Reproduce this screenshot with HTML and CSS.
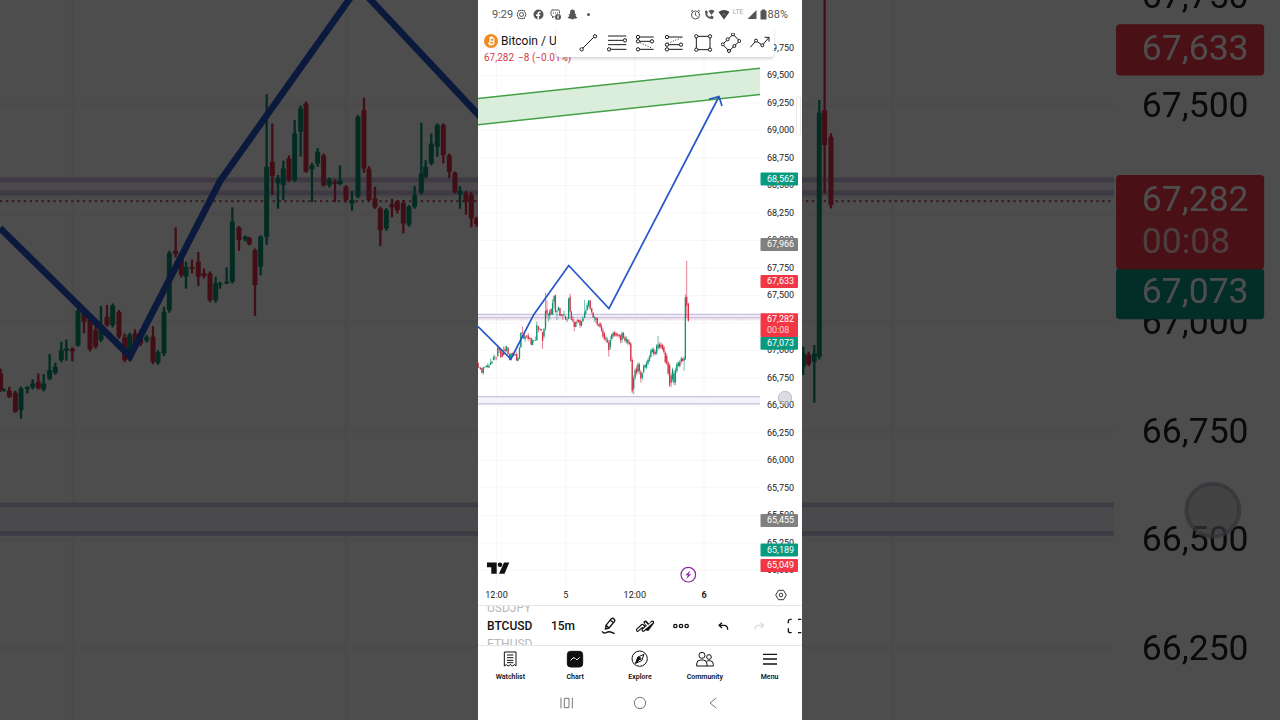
FILE: index.html
```html
<!DOCTYPE html>
<html lang="en">
<head>
  <meta charset="UTF-8">
  <meta name="viewport" content="width=device-width, initial-scale=1.0">
  <title>Bitcoin / U.S. Dollar</title>
  <link rel="stylesheet" href="styles.css">
</head>
<body>
  <svg class="backdrop" viewBox="0 0 324 720" preserveAspectRatio="xMidYMid slice" aria-hidden="true"></svg>

  <main class="phone">
    <div class="status">
      <div class="notices">
        <span class="clock">9:29</span>
        <svg width="11" height="11" viewBox="0 0 22 22" fill="none" stroke="#555" stroke-width="2"><circle cx="11" cy="11" r="8.500"/><circle cx="11" cy="11" r="4"/><path d="M6 4L4 2M16 4l2-2M6 18l-2 2M16 18l2 2" stroke-width="1.500"/></svg>
        <svg width="11" height="11" viewBox="0 0 22 22"><circle cx="11" cy="11" r="10" fill="#555"/><path d="M9 21v-7H6v-3h3V9q0-4 4-4h2v3h-2q-1 0-1 1v2h3l-1 3h-2v7z" fill="#fff"/></svg>
        <svg width="11" height="11" viewBox="0 0 22 22"><path d="M4 2h12q3 0 3 3v4M2 5v6q0 3 3 3v4l4-4M2 5q0-3 3-3" fill="none" stroke="#555" stroke-width="2"/><path d="M6 8h2M10 8h2M14 8h2" stroke="#555" stroke-width="2"/><circle cx="16" cy="16" r="6" fill="#555"/><path d="M16 21v-7q0-2 2-2M14 16h4" fill="none" stroke="#fff" stroke-width="1.500"/></svg>
        <svg width="11" height="11" viewBox="0 0 22 22"><path d="M11 1q5 0 5 6v3l3 0-2 3q1 3 4 4-1 2-4 2-1 1-3 0-1 2-3 2t-3-2q-2 1-3 0-3 0-4-2 3-1 4-4L3 10h3V7q0-6 5-6z" fill="#555"/></svg>
        <span class="dot"></span>
      </div>
      <div class="signals">
        <svg width="11" height="11" viewBox="0 0 22 22" fill="none" stroke="#555" stroke-width="2"><circle cx="11" cy="12" r="8"/><path d="M11 7v5l3 3M2 5l4-3M20 5l-4-3"/></svg>
        <svg width="11" height="11" viewBox="0 0 22 22"><path d="M2 4l4-1 2 5-2 2q2 5 6 6l2-3 5 2-1 5Q2 21 2 4z" fill="#555"/><path d="M9 4q6-5 12 0l-6 8z" fill="#555"/></svg>
        <svg width="12" height="11" viewBox="0 0 24 22"><path d="M1 6q11-8 22 0L12 21z" fill="#444"/><path d="M9 13l3-4 3 4" fill="none" stroke="#999" stroke-width="1.500"/></svg>
        <span class="lte">LTE</span>
        <svg width="10" height="11" viewBox="0 0 20 22"><path d="M19 2v18H1z" fill="#555"/></svg>
        <svg width="7" height="11" viewBox="0 0 14 22"><path d="M4 1h6v2h2q1 0 1 1v16q0 1-1 1H2q-1 0-1-1V4q0-1 1-1h2z" fill="#555"/></svg>
        <span class="clock">88%</span>
      </div>
    </div>

    <section class="chart">
      <svg class="plot" viewBox="0 28 324 577" preserveAspectRatio="xMidYMin slice" role="img" aria-label="BTCUSD 15 minute chart"></svg>
      <div class="legend">
        <h1>
          <svg width="14" height="14" viewBox="0 0 28 28"><circle cx="14" cy="14" r="14" fill="#f08c1d"/><g transform="rotate(12 14 14)" fill="none" stroke="#fff" stroke-width="2.400"><path d="M9 8h7q4 0 4 3t-4 3h-4h5q4 0 4 3t-5 3H9M12 8v12M13 5v3M16 5v3M13 20v3M16 20v3"/></g></svg>
          Bitcoin / U
        </h1>
        <p><span>67,282</span><span>−8 (−0.01%)</span></p>
      </div>
      <div class="drawbar">
        <svg class="grip" width="8" height="12" viewBox="0 0 8 12" fill="#b5b5b5"><path d="M1 1h1.500v1.500h-1.500zM6 1h1.500v1.500h-1.500zM1 5h1.500v1.500h-1.500zM6 5h1.500v1.500h-1.500zM1 9h1.500v1.500h-1.500zM6 9h1.500v1.500h-1.500z"/></svg>
        <button aria-label="Trend line"><svg viewBox="0 0 60 60"><path d="M14 46L47 13"/><circle cx="11" cy="49" r="5"/><circle cx="51" cy="10" r="5"/></svg></button>
        <button aria-label="Fib retracement"><svg viewBox="0 0 60 60"><path d="M3 9h55M3 22h46M3 35h55M11 49h47"/><circle cx="54" cy="22" r="5"/><circle cx="6" cy="49" r="5"/></svg></button>
        <button aria-label="Long position"><svg viewBox="0 0 60 60"><path d="M14 12h42M14 25h32M14 49h42"/><path d="M16 29l36 17" stroke-dasharray="3 5"/><circle cx="9" cy="12" r="5"/><circle cx="9" cy="25" r="5"/><circle cx="51" cy="25" r="5"/><circle cx="9" cy="49" r="5"/></svg></button>
        <button aria-label="Short position"><svg viewBox="0 0 60 60"><path d="M14 12h42M14 35h32M14 49h42"/><path d="M12 31l38-16" stroke-dasharray="3 5"/><circle cx="9" cy="12" r="5"/><circle cx="9" cy="35" r="5"/><circle cx="51" cy="35" r="5"/><circle cx="9" cy="49" r="5"/></svg></button>
        <button aria-label="Rectangle"><svg viewBox="0 0 60 60"><path d="M10 10h41v40H10z"/><circle cx="10" cy="10" r="5"/><circle cx="51" cy="10" r="5"/><circle cx="10" cy="50" r="5"/><circle cx="51" cy="50" r="5"/></svg></button>
        <button aria-label="Rotated rectangle"><svg viewBox="0 0 60 60"><path d="M36 4L56 24L24 54L5 34z"/><circle cx="36" cy="4" r="4.500"/><circle cx="55" cy="24" r="4.500"/><circle cx="24" cy="54" r="4.500"/><circle cx="5" cy="34" r="4.500"/><circle cx="20" cy="19" r="4.500"/><circle cx="40" cy="39" r="4.500"/></svg></button>
        <button aria-label="Path"><svg viewBox="0 0 60 60"><path d="M1 43L18 23L37 37L57 13M44 13h13v13"/><circle cx="18" cy="23" r="4.500"/><circle cx="37" cy="37" r="4.500"/></svg></button>
      </div>
    </section>

    <div class="quickbar">
      <div class="wheel">
        <span>USDJPY</span>
        <span class="current">BTCUSD</span>
        <span>ETHUSD</span>
      </div>
      <button class="interval">15m</button>
      <button class="tool" aria-label="Draw"><svg viewBox="0 0 54 54"><path d="M16 36l2-11L34 5q4-3 8 1t1 8L27 33zM18 25l9 8M31 9l9 8M6 43q6 8 14 3t24 4"/></svg></button>
      <button class="tool" aria-label="Indicators"><svg viewBox="0 0 54 54"><path class="band" d="M5 39l14-13 6 6 7-7"/><path class="band-fill" d="M5 39l14-13 6 6 7-7"/><path class="band" d="M22 39l7-7 6 4 14-20M28 16l8 9"/><path class="band-fill" d="M22 39l7-7 6-4 14-12M28 18l8 9"/></svg></button>
      <button class="tool" aria-label="More"><svg viewBox="0 0 54 54"><circle cx="10" cy="27" r="5"/><circle cx="27" cy="27" r="5"/><circle cx="44" cy="27" r="5"/></svg></button>
      <span class="divider"></span>
      <button class="tool" aria-label="Undo"><svg viewBox="0 0 54 54"><path d="M24 17l-9 8 9 8M16 25h14q11 0 11 13"/></svg></button>
      <button class="tool" aria-label="Redo" disabled><svg viewBox="0 0 54 54"><path d="M32 17l9 8-9 8M40 25H26q-11 0-11 13"/></svg></button>
      <button class="tool" aria-label="Full screen"><svg viewBox="0 0 54 54"><path d="M7 19v-6q0-6 6-6h4M7 34v7q0 6 6 6h4M36 7h10M36 47h10"/></svg></button>
    </div>

    <nav class="tabs">
      <a href="#"><svg viewBox="0 0 54 54"><path d="M10 6h35v42l-5-4-5 4-7-4-7 4-5-4-6 4zM18 15h19M18 23h19M18 31h19M18 38h19"/></svg>Watchlist</a>
      <a href="#" aria-current="page"><svg viewBox="0 0 54 54"><rect x="4" y="4" width="46" height="47" rx="10" fill="#0f0f0f"/><path d="M14 31l7-7q3-2 6 1l3 3q3 2 5 0l6-6" stroke="#fff"/></svg>Chart</a>
      <a href="#"><svg viewBox="0 0 54 54"><circle cx="26" cy="26" r="23"/><path d="M39 13l-7 19-18 8 7-19z"/><path d="M26 23l-5-2-7 19 13-13z" fill="#111"/><circle cx="27" cy="26" r="3"/></svg>Explore</a>
      <a href="#"><svg viewBox="0 0 54 54"><circle cx="18" cy="16" r="9"/><circle cx="39" cy="21" r="7"/><path d="M2 48v-6q0-12 12-12h8q11 0 11 12v6zM33 34q2-2 6-2h2q11 0 11 11v5H33"/></svg>Community</a>
      <a href="#"><svg viewBox="0 0 54 54"><path d="M6 13h42M6 27h42M6 42h42" stroke-width="4"/></svg>Menu</a>
    </nav>

    <div class="sysnav">
      <button aria-label="Recent apps"><svg viewBox="0 0 42 42"><path d="M3 5v32M37 5v32M13 7h14v28H13z"/></svg></button>
      <button aria-label="Home"><svg viewBox="0 0 42 42"><circle cx="21" cy="21" r="17"/></svg></button>
      <button aria-label="Back"><svg viewBox="0 0 42 42"><path d="M31 6L12 21l19 15"/></svg></button>
    </div>
  </main>

  <script src="chart.js"></script>
</body>
</html>
```

FILE: styles.css
```css
* {
  box-sizing: border-box;
}

body {
  margin: 0;
  min-height: 100vh;
  display: flex;
  justify-content: center;
  background: #000;
  color: #131313;
  font-family: Roboto, "Liberation Sans", sans-serif;
  overflow: hidden;
}

button {
  border: none;
  padding: 0;
  background: none;
  color: inherit;
  font-family: inherit;
  cursor: pointer;
}

svg {
  display: block;
}

/* Dimmed, enlarged chart behind the phone */
.backdrop {
  position: fixed;
  inset: 0;
  width: 100%;
  height: 100%;
  opacity: 0.3;
}

.phone {
  position: relative;
  display: flex;
  flex-direction: column;
  width: 324px;
  min-height: 100vh;
  background: #fff;
  overflow: hidden;
}

/* Status bar */
.status {
  display: flex;
  align-items: center;
  justify-content: space-between;
  height: 28px;
  padding: 0 14px;
}

.notices,
.signals {
  display: flex;
  align-items: center;
}

.notices {
  gap: 6px;
}

.signals {
  gap: 3px;
}

.clock {
  font-size: 11px;
  color: #555;
}

.notices .clock {
  margin-right: -3px;
}

.signals .clock {
  margin-left: -2px;
}

.dot {
  width: 3px;
  height: 3px;
  margin-left: 3px;
  border-radius: 50%;
  background: #555;
}

.lte {
  padding-bottom: 4px;
  font-size: 7px;
  line-height: 8px;
  color: #aaa;
}

/* Chart */
.chart {
  position: relative;
  flex: 1;
  min-height: 0;
}

.plot {
  width: 100%;
  height: 100%;
}

.axis {
  font-size: 9px;
  fill: #222;
}

.tag {
  fill: #fff;
}

.legend {
  position: absolute;
  top: 5px;
  left: 6px;
}

.legend h1 {
  display: flex;
  align-items: center;
  gap: 3px;
  margin: 0;
  font-size: 12px;
  line-height: 16px;
  font-weight: 400;
}

.legend p {
  display: flex;
  gap: 4px;
  margin: 3px 0 0;
  font-size: 10px;
  line-height: 12px;
  color: #d33a4c;
}

.drawbar {
  position: absolute;
  top: 0;
  left: 78px;
  right: 28px;
  display: flex;
  align-items: center;
  height: 29px;
  padding-left: 6px;
  background: #fff;
  border-radius: 0 0 4px 4px;
  box-shadow: 0 2px 3px rgba(0, 0, 0, 0.16);
}

.drawbar .grip {
  margin-right: 4px;
}

.drawbar button {
  flex: 1;
  display: flex;
  justify-content: center;
}

.drawbar button svg {
  width: 20px;
  height: 20px;
  fill: #fff;
  stroke: #1a1a1a;
  stroke-width: 3;
}

.drawbar path {
  fill: none;
}

/* Symbol, interval and tools */
.quickbar {
  display: flex;
  align-items: center;
  height: 40px;
  border-top: 1px solid #e6e6e6;
  overflow: hidden;
}

.wheel {
  flex: none;
  display: flex;
  flex-direction: column;
  justify-content: center;
  width: 64px;
  height: 39px;
  padding-left: 9px;
  overflow: hidden;
  font-size: 12px;
  line-height: 18px;
  color: #b8b8b8;
}

.wheel .current {
  font-weight: 500;
  color: #131313;
}

.interval {
  flex: none;
  width: 42px;
  margin-right: 7px;
  font-size: 12px;
  font-weight: 500;
}

.tool {
  flex: none;
  display: flex;
  justify-content: center;
  width: 36px;
}

.tool svg,
.tabs svg {
  width: 18px;
  height: 18px;
  fill: none;
  stroke: #131313;
  stroke-width: 3;
  stroke-linejoin: round;
}

.tool svg {
  stroke-width: 4;
}

.tool .band {
  stroke-width: 11;
  stroke-linecap: round;
}

.tool .band-fill {
  stroke: #fff;
  stroke-width: 4;
  stroke-linecap: round;
}

.tool:disabled svg {
  stroke: #dcdcdc;
}

.divider {
  width: 1px;
  height: 20px;
  margin: 0 3px;
  background: #eee;
}

/* App tabs */
.tabs {
  display: grid;
  grid-template-columns: repeat(5, 1fr);
  height: 40px;
  border-top: 1px solid #e6e6e6;
}

.tabs a {
  display: flex;
  flex-direction: column;
  align-items: center;
  gap: 4px;
  padding-top: 4px;
  font-size: 7px;
  line-height: 10px;
  font-weight: 600;
  color: #131313;
  text-decoration: none;
}

/* System buttons */
.sysnav {
  display: grid;
  grid-template-columns: repeat(3, 1fr);
  align-items: center;
  height: 35px;
  padding: 0 52px;
}

.sysnav button {
  display: flex;
  justify-content: center;
}

.sysnav svg {
  width: 14px;
  height: 14px;
  fill: none;
  stroke: #777;
  stroke-width: 3;
}
```

FILE: chart.js
```js
// x, high, body top, body bottom, low, direction (1 up, 0 down)
const candles = [
  [2,1105,1120,1170,1175,0],[12,1165,1168,1172,1175,1],[28,1160,1172,1190,1194,0],[46,1172,1178,1235,1238,0],
  [63,1160,1165,1230,1256,1],[82,1158,1162,1167,1180,1],[98,1138,1150,1162,1168,1],[115,1120,1145,1165,1168,0],
  [131,1122,1150,1168,1174,1],[149,1062,1110,1136,1140,1],[166,1088,1100,1118,1124,1],[184,1025,1050,1080,1086,1],
  [199,1018,1045,1052,1082,1],[217,1042,1046,1054,1084,0],[234,925,932,1036,1040,1],[252,930,936,965,1000,0],
  [270,950,958,1048,1054,0],[287,980,990,1040,1046,0],[303,918,985,1020,1026,1],[321,915,950,975,980,0],
  [338,910,916,975,982,1],[357,930,936,1010,1016,0],[374,1000,1012,1080,1086,0],[389,998,1005,1078,1084,1],
  [405,988,1000,1030,1042,0],[422,990,1005,1030,1038,0],[440,1005,1010,1022,1028,1],[459,978,1010,1086,1092,0],
  [474,1050,1056,1088,1094,1],[492,920,935,1060,1068,1],[508,752,758,930,938,1],[527,682,752,762,772,0],
  [544,765,775,825,832,0],[558,785,800,830,866,1],[576,778,800,806,820,0],[595,756,785,830,858,0],
  [612,805,820,828,835,0],[630,814,820,900,906,0],[647,830,850,900,908,1],[660,845,850,854,866,1],
  [680,802,845,850,852,1],[697,622,665,845,850,1],[717,678,682,720,752,0],[736,706,710,718,724,1],
  [748,710,714,732,736,0],[765,745,750,855,948,0],[782,706,710,800,826,1],[800,282,500,710,734,1],
  [817,370,485,528,585,0],[834,525,533,550,626,1],[850,482,505,555,600,1],[867,466,475,540,546,0],
  [884,360,400,540,546,1],[902,316,325,395,470,1],[918,304,310,515,518,0],[936,488,495,508,606,1],
  [953,444,455,490,500,1],[971,460,466,556,560,0],[988,532,537,556,562,1],[1005,538,545,552,606,0],
  [1020,496,540,552,556,1],[1038,555,560,600,606,0],[1056,572,600,610,632,1],[1074,345,350,590,594,1],
  [1092,292,330,505,518,0],[1107,498,506,600,604,0],[1125,560,595,622,626,0],[1141,620,625,690,738,0],
  [1159,624,630,685,692,1],[1176,596,612,622,652,0],[1192,600,604,630,640,0],[1210,600,608,670,700,0],
  [1227,615,620,674,680,1],[1244,558,585,620,626,1],[1264,368,520,578,584,1],[1277,480,500,530,534,1],
  [1294,400,430,490,496,1],[1312,370,375,440,470,1],[1330,370,375,465,490,0],[1348,460,466,515,534,0],
  [1365,514,518,576,580,0],[1380,558,572,582,626,1],[1398,572,578,605,644,0],[1414,576,585,655,682,0],
  [1430,650,655,672,680,0],[1447,630,645,690,700,0],[1464,650,680,730,745,0],[1481,700,730,800,820,0],
  [1498,750,764,830,850,0],[1516,790,815,840,870,1],[1533,810,840,870,882,0],[1550,840,870,960,1040,0],
  [1568,800,843,930,961,1],[1585,764,780,830,850,1],[1602,740,760,800,815,1],[1620,735,750,790,800,0],
  [1637,750,762,790,810,0],[1655,764,775,790,800,1],[1672,770,780,800,825,0],[1690,775,790,850,880,0],
  [1707,740,760,840,880,1],[1724,745,760,815,830,0],[1742,790,810,850,870,0],[1759,800,830,860,885,1],
  [1776,825,840,880,900,0],[1794,840,870,890,910,0],[1811,870,885,1090,1100,0],[1828,1050,1080,1450,1475,0],
  [1845,1260,1290,1420,1485,1],[1862,1180,1200,1290,1320,1],[1879,1150,1180,1230,1260,0],[1896,1110,1130,1220,1245,1],
  [1913,1110,1130,1210,1250,0],[1930,1200,1220,1300,1350,0],[1947,1225,1240,1290,1320,1],[1964,1130,1150,1225,1240,1],
  [1981,1130,1140,1165,1180,1],[1998,1090,1110,1170,1190,1],[2015,1060,1080,1120,1140,1],[2032,1020,1040,1090,1105,1],
  [2049,950,970,1040,1060,1],[2066,935,950,985,1000,1],[2083,930,955,1010,1030,0],[2100,960,985,1010,1025,0],
  [2117,890,915,1000,1020,1],[2134,795,900,940,965,1],[2151,870,890,930,950,0],[2168,870,900,930,950,0],
  [2186,885,900,950,965,0],[2203,905,930,985,1005,0],[2220,975,990,1105,1120,0],[2237,1000,1030,1120,1140,0],
  [2254,1090,1110,1240,1260,0],[2271,1120,1140,1380,1400,0],[2289,1230,1260,1350,1400,0],[2306,1170,1190,1310,1340,1],
  [2323,1210,1240,1350,1375,1],[2340,1170,1200,1340,1380,1],[2357,1110,1130,1210,1235,1],[2374,1095,1110,1150,1165,1],
  [2392,1080,1100,1150,1170,0],[2410,1040,1060,1100,1125,1],[2426,1055,1064,1092,1098,0],[2443,1035,1060,1085,1208,1],
  [2458,300,338,1070,1078,1],[2474,-98,330,435,580,0],[2493,400,410,615,625,0]
];

// label text, top, colour
const tags = [
  ['68,562', 172.5, '#089981'],
  ['67,966', 238, '#808080'],
  ['67,633', 275, '#f23645'],
  ['67,073', 336.7, '#089981'],
  ['65,455', 514, '#808080'],
  ['65,189', 543.5, '#089981'],
  ['65,049', 559, '#f23645']
];

const times = [['12:00', 18.5], ['5', 87.7], ['12:00', 156.8], ['6', 226]];

function drawChart(svg) {
  let out = '<rect width="324" height="720" fill="#fff"/>';

  // grid and price scale
  let labels = '';
  for (let price = 69750; price >= 65000; price -= 250) {
    const y = 75.4 + (69500 - price) * 0.11;
    out += `<path d="M0 ${y}H282" stroke="#f7f7f7"/>`;
    labels += `<text class="axis" x="289" y="${y + 3}">${price.toLocaleString('en-US')}</text>`;
  }
  times.forEach(([text, x]) => {
    out += `<path d="M${x} 28V585" stroke="#f6f6f6"/>`;
    labels += `<text class="axis" x="${x}" y="598" text-anchor="middle"${text === '6' ? ' font-weight="700"' : ''}>${text}</text>`;
  });

  // green channel and supply / demand zones
  out += `
    <path d="M0 98.500L282 68.300V94.500L0 124.700z" fill="#daeedb"/>
    <path d="M0 98.500L282 68.300M0 124.700L282 94.500" stroke="#43a047" stroke-width="1.500"/>
    <path d="M0 314.400H282V319H0z" fill="#f3edf8"/>
    <path d="M0 314.400H282M0 317.700H282" stroke="#c9c0e0" stroke-width="1.200"/>
    <path d="M0 319.800H282" stroke="#b8607a" stroke-width=".6" stroke-dasharray=".6 .9"/>
    <path d="M0 396.700H282V403.900H0z" fill="#f4f3fb"/>
    <path d="M0 396.700H282M0 403.900H282" stroke="#c9c4de" stroke-width="1.200"/>`;

  out += '<g transform="translate(0 268.900) scale(.08437)">';
  candles.forEach(([x, high, top, bottom, low, up]) => {
    const color = up ? '#089270' : '#d62f45';
    out += `<path d="M${x} ${high}V${low}" stroke="${color}" stroke-width="7"/>`;
    out += `<path d="M${x} ${top}V${bottom}" stroke="${color}" stroke-width="15"/>`;
  });
  out += '</g>';

  // projected path
  out += `<path d="M0 326.600L32.900 359L55.700 314.700L90.700 265.500L131 308.500L241 96.500M231 99.200L241 96.500L244 106" fill="none" stroke="#2557c8" stroke-width="1.700"/>`;

  out += labels;
  tags.forEach(([text, y, color]) => {
    out += `<rect x="282.500" y="${y}" width="37.500" height="13" rx="1" fill="${color}"/>`;
    out += `<text class="axis tag" x="289" y="${y + 9}">${text}</text>`;
  });
  out += `
    <rect x="282.500" y="313.200" width="37.500" height="23.800" rx="1" fill="#f23645"/>
    <text class="axis tag" x="289" y="322.400">67,282</text>
    <text class="axis tag" x="289" y="332.800" opacity=".75">00:08</text>
    <rect x="318.500" y="97" width="4" height="38" rx="1" fill="#fff" stroke="#e2e2e2" stroke-width=".7"/>
    <circle cx="307" cy="398" r="6.700" fill="#c4c4cc" fill-opacity=".6" stroke="#a9a9bd" stroke-opacity=".7"/>`;

  // logo, event marker and axis settings
  out += `
    <path d="M9 562.500h9.700v11.300h-5.400v-6.600H9zM26 562.500h5.300l-4.800 11.300h-5.500z" fill="#111"/>
    <circle cx="22" cy="564.800" r="2.300" fill="#111"/>
    <circle cx="210.300" cy="574.700" r="7.300" fill="#fff" stroke="#8e2aa8" stroke-width="1.200"/>
    <path d="M212.300 570.500l-5 4.700h2.600l-1.600 3.800 5-4.800h-2.600z" fill="#8e2aa8"/>
    <path d="M300.500 590.300h5l2.800 4.700-2.800 4.700h-5l-2.800-4.700z" fill="none" stroke="#333"/>
    <circle cx="303" cy="595" r="1.800" fill="none" stroke="#333"/>`;

  svg.innerHTML = out;
}

document.querySelectorAll('.backdrop, .plot').forEach(drawChart);
```
